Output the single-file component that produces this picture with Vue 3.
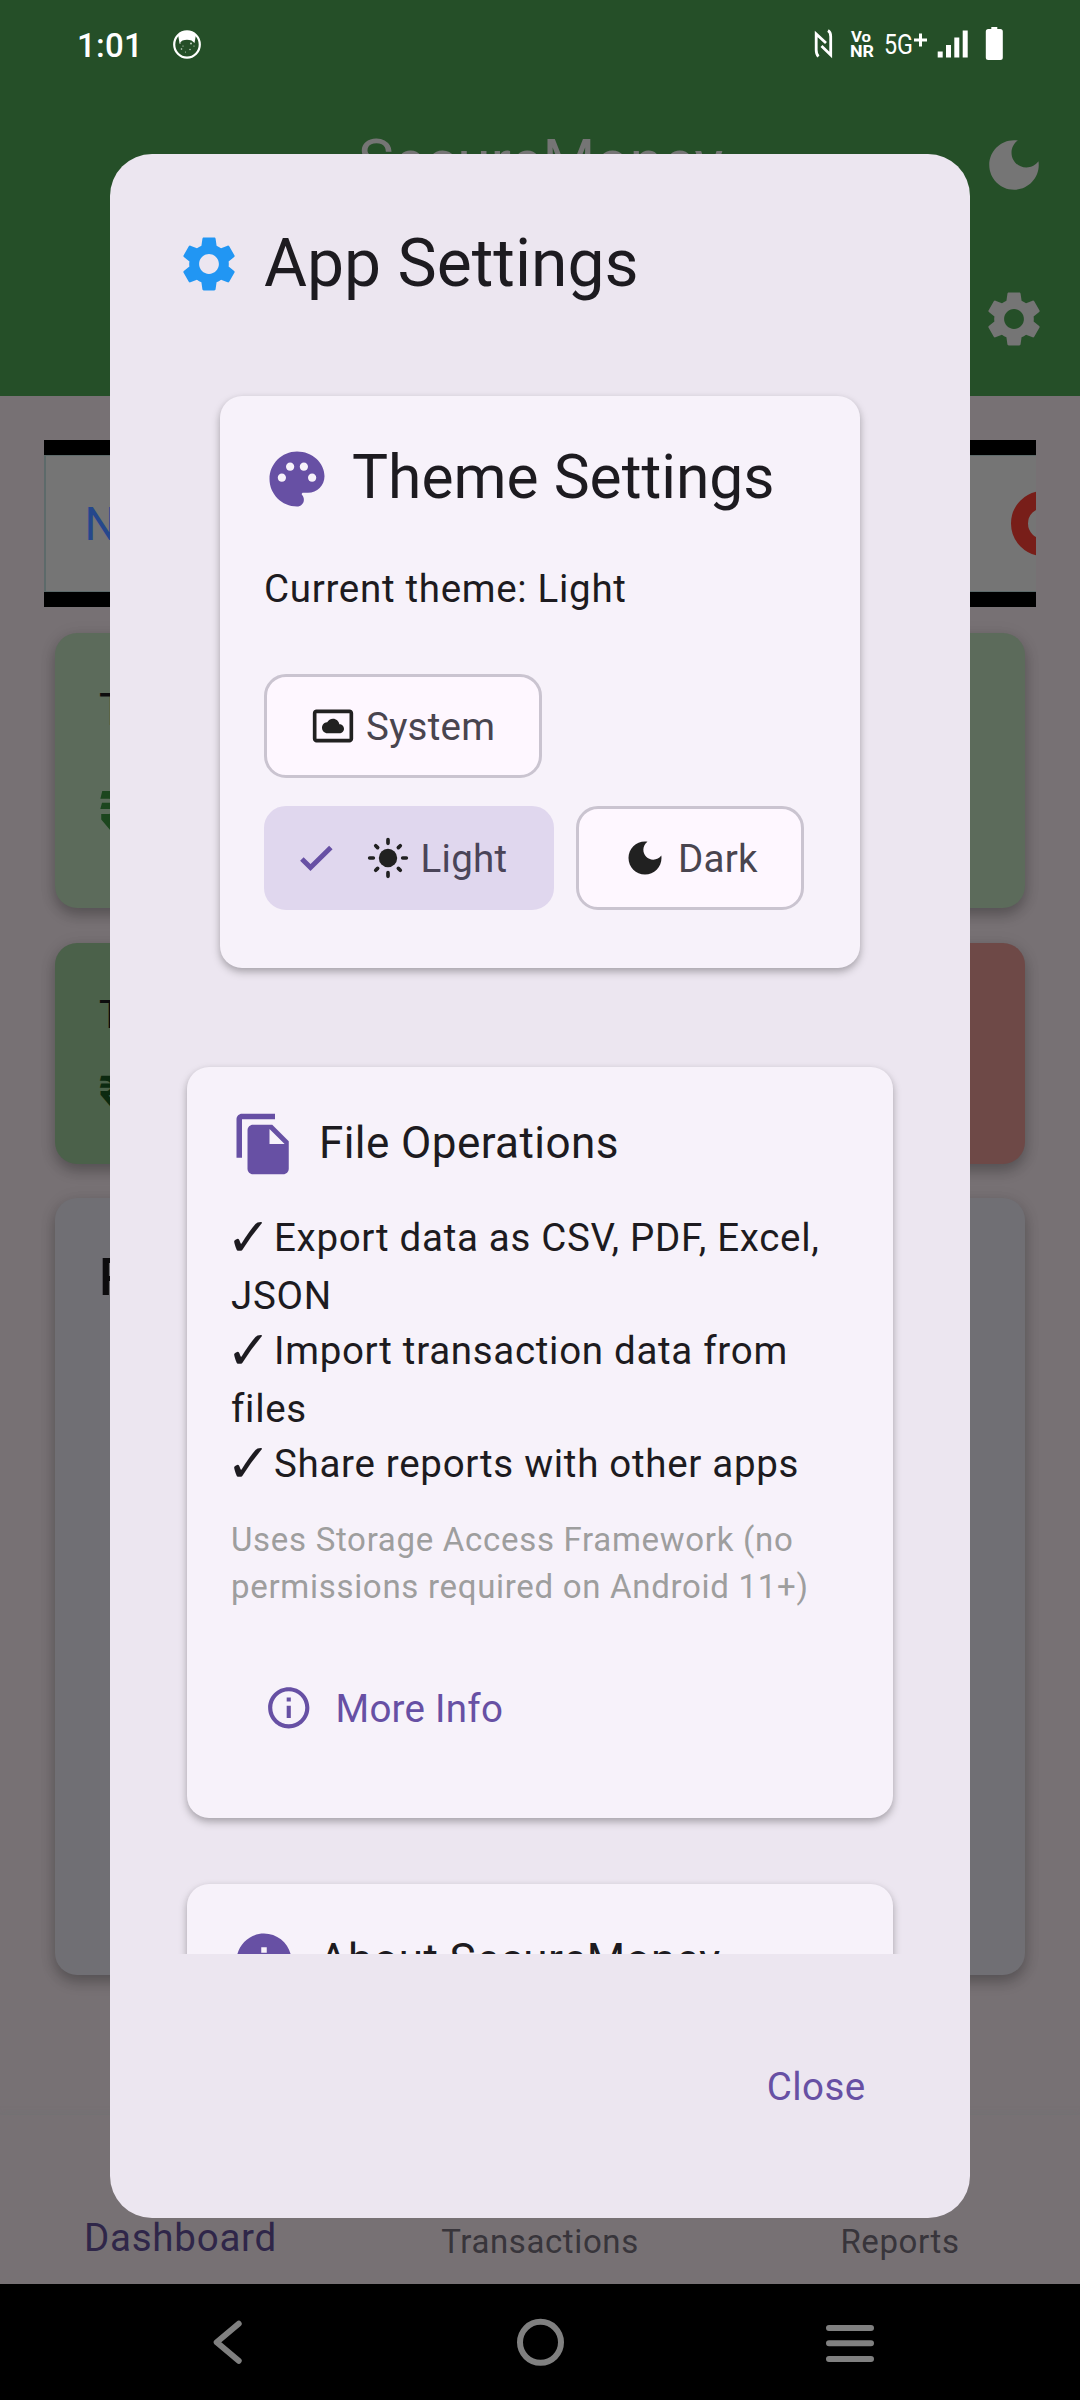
<script setup>
const gearPath = 'M19.14 12.94c.04-.3.06-.61.06-.94 0-.32-.02-.64-.07-.94l2.03-1.58c.18-.14.23-.41.12-.61l-1.92-3.32c-.12-.22-.37-.29-.59-.22l-2.39.96c-.5-.38-1.03-.7-1.62-.94l-.36-2.54c-.04-.24-.24-.41-.48-.41h-3.84c-.24 0-.43.17-.47.41l-.36 2.54c-.59.24-1.13.57-1.62.94l-2.39-.96c-.22-.08-.47 0-.59.22L2.74 8.87c-.12.21-.08.47.12.61l2.03 1.58c-.05.3-.09.63-.09.94s.02.64.07.94l-2.03 1.58c-.18.14-.23.41-.12.61l1.92 3.32c.12.22.37.29.59.22l2.39-.96c.5.38 1.03.7 1.62.94l.36 2.54c.05.24.24.41.48.41h3.84c.24 0 .44-.17.47-.41l.36-2.54c.59-.24 1.13-.56 1.62-.94l2.39.96c.22.08.47 0 .59-.22l1.92-3.32c.12-.22.07-.47-.12-.61l-2.01-1.58zM12 15.6c-1.98 0-3.6-1.62-3.6-3.6s1.62-3.6 3.6-3.6 3.6 1.62 3.6 3.6-1.62 3.6-3.6 3.6z'
const moonPath = 'M12 3c-4.97 0-9 4.03-9 9s4.03 9 9 9 9-4.03 9-9c0-.46-.04-.92-.1-1.36-.98 1.37-2.58 2.26-4.4 2.26-2.98 0-5.4-2.42-5.4-5.4 0-1.81.89-3.42 2.26-4.4-.44-.06-.9-.1-1.36-.1z'

const features = [
  { head: 'Export data as CSV, PDF, Excel,', tail: 'JSON' },
  { head: 'Import transaction data from', tail: 'files' },
  { head: 'Share reports with other apps', tail: '' }
]
const tabs = [
  { label: 'Dashboard', active: true },
  { label: 'Transactions', active: false },
  { label: 'Reports', active: false }
]
</script>

<template>
  <div class="screen">
    <div class="backdrop">
      <header class="topbar">
        <div class="status">
          <span class="clock">1:01</span>
          <svg class="cat" viewBox="0 0 28 29">
            <ellipse cx="14" cy="14.5" rx="12.8" ry="13.2" fill="none" stroke="#fff" stroke-width="2.2" />
            <path d="M5 4.5Q14-1.5 23 4.5L21.5 13 18.5 10.5Q14 8.8 9.5 10.5L6.500 13Z" fill="#fff" />
            <g fill="#d5e0d5">
              <circle cx="7" cy="13" r=".8" /><circle cx="18" cy="13.500" r=".9" /><circle cx="10" cy="16" r=".6" />
              <circle cx="21" cy="16" r=".6" /><circle cx="8.500" cy="19" r=".8" /><circle cx="17" cy="19.500" r=".7" />
              <circle cx="12.500" cy="22" r=".5" />
            </g>
          </svg>
          <svg class="radio" viewBox="0 0 200 40" font-family="Roboto, sans-serif" fill="#fff">
            <path d="M5.500 36.500Q3.200 34.500 3.200 30V14L13 23M8.500 26L17.700 35V16.500Q17.700 12 15 10.500" fill="none" stroke="#fff" stroke-width="2.800" />
            <text x="38" y="22" font-size="14" font-weight="700" textLength="20" lengthAdjust="spacingAndGlyphs">Vo</text>
            <text x="37" y="36.500" font-size="16.500" font-weight="700" textLength="24" lengthAdjust="spacingAndGlyphs">NR</text>
            <text x="71" y="33.500" font-size="28.500" font-weight="400" textLength="29" lengthAdjust="spacingAndGlyphs">5G</text>
            <path d="M101 20h13M107.500 13.500v13" stroke="#fff" stroke-width="3" />
            <path d="M124.700 31.500h5v6h-5zM133 25h5v12.500h-5zM141.300 17.500h5v20h-5zM149.700 10.500h5v27h-5z" />
            <path d="M178.300 7h6v2h3q2.500 0 2.500 2.500v26q0 2.500-2.500 2.500h-12q-2.500 0-2.500-2.500v-26q0-2.500 2.500-2.500h3z" />
          </svg>
        </div>
        <div class="appbar">
          <span class="app-title">SecureMoney</span>
          <div class="bar-actions">
            <svg class="icon66" viewBox="0 0 24 24" fill="#757575"><path :d="moonPath" /></svg>
            <svg class="icon66" viewBox="0 0 24 24" fill="#757575"><path :d="gearPath" /></svg>
          </div>
        </div>
      </header>

      <main class="content">
        <div class="ad">
          <div class="ad-body">
            <span class="ad-text">N</span>
            <span class="ad-ring"></span>
          </div>
        </div>
        <section class="bcard balance">
          <p class="label">Total Balance</p>
          <p class="amount">₹0.00</p>
        </section>
        <div class="pair">
          <section class="bcard income">
            <p class="label">Total Income</p>
            <p class="amount">₹0.00</p>
          </section>
          <section class="bcard expense"></section>
        </div>
        <section class="bcard recent"><p class="label">Recent</p></section>
      </main>

      <nav class="tabs">
        <span v-for="t in tabs" :key="t.label" :class="['tab', { active: t.active }]">{{ t.label }}</span>
      </nav>
      <footer class="sysnav">
        <svg viewBox="0 0 54 54"><path d="M35.700 8.700L13.700 27.200L35.700 45.700" fill="none" stroke="#808080" stroke-width="6" stroke-linecap="round" stroke-linejoin="round" /></svg>
        <svg viewBox="0 0 54 54"><circle cx="27.500" cy="27.300" r="20.500" fill="none" stroke="#808080" stroke-width="6" /></svg>
        <svg viewBox="0 0 54 54"><path d="M6 13h42M6 28.300h42M6 44h42" fill="none" stroke="#808080" stroke-width="6" stroke-linecap="round" /></svg>
      </footer>
    </div>

    <div class="dialog">
      <div class="dlg-title">
        <svg class="icon66" viewBox="0 0 24 24" fill="#2196f3"><path :d="gearPath" /></svg>
        <h1>App Settings</h1>
      </div>

      <div class="scroll">
        <section class="card theme">
          <div class="card-head">
            <svg class="icon66" viewBox="0 0 24 24" fill="#6750a4"><path d="M12 2C6.490 2 2 6.490 2 12s4.490 10 10 10c1.380 0 2.500-1.120 2.500-2.500 0-.61-.23-1.200-.64-1.670-.08-.1-.13-.21-.13-.33 0-.28.22-.5.5-.5H16c3.310 0 6-2.690 6-6 0-4.960-4.490-9-10-9zm-5.500 11c-.83 0-1.500-.67-1.500-1.500S5.670 10 6.500 10 8 10.670 8 11.500 7.330 13 6.500 13zm3-4C8.670 9 8 8.330 8 7.500S8.670 6 9.500 6s1.500.67 1.500 1.500S10.330 9 9.500 9zm5 0c-.83 0-1.500-.67-1.500-1.500S13.670 6 14.500 6s1.500.67 1.500 1.500S15.330 9 14.500 9zm3 4c-.83 0-1.500-.67-1.500-1.500s.67-1.500 1.500-1.500 1.500.67 1.500 1.500-.67 1.500-1.500 1.500z" /></svg>
            <h2>Theme Settings</h2>
          </div>
          <p class="current">Current theme: Light</p>
          <div class="chips">
            <div class="chip system">
              <svg class="icon44" viewBox="0 0 24 24" fill="#212121"><path d="M9 16h6.500c1.380 0 2.500-1.120 2.500-2.500S16.880 11 15.500 11h-.05c-.24-1.690-1.690-3-3.450-3-1.400 0-2.600.83-3.160 2.020h-.16C7.170 10.180 6 11.450 6 13c0 1.660 1.340 3 3 3zM21 3H3c-1.100 0-2 .9-2 2v14c0 1.100.9 2 2 2h18c1.100 0 2-.9 2-2V5c0-1.100-.9-2-2-2zm0 16.010H3V4.990h18v14.020z" /></svg>
              <span>System</span>
            </div>
            <div class="chip light">
              <svg class="icon44 tick" viewBox="0 0 24 24"><path d="M4.300 12.500L9 17.200L20.100 6.300" fill="none" stroke="#6750a4" stroke-width="2.700" /></svg>
              <svg class="icon44" viewBox="0 0 24 24" fill="#212121">
                <circle cx="12" cy="12" r="5" />
                <path d="M2 12h2M20 12h2M12 2v2M12 20v2M5.300 5.300l1.050 1.050M17.650 17.650l1.050 1.050M5.300 18.700l1.050-1.050M17.650 6.350l1.050-1.050" stroke="#212121" stroke-width="2" stroke-linecap="round" />
              </svg>
              <span>Light</span>
            </div>
            <div class="chip dark">
              <svg class="icon44" viewBox="0 0 24 24" fill="#212121"><path :d="moonPath" /></svg>
              <span>Dark</span>
            </div>
          </div>
        </section>

        <section class="card files">
          <div class="card-head">
            <svg class="icon66" viewBox="0 0 24 24" fill="#6750a4"><path d="M16 1H4c-1.100 0-2 .9-2 2v14h2V3h12V1zm-1 4l6 6v10c0 1.100-.9 2-2 2H7.990C6.890 23 6 22.100 6 21l.01-14c0-1.100.89-2 1.990-2h7zm-1 7h5.500L14 6.500V12z" /></svg>
            <h3>File Operations</h3>
          </div>
          <ul class="features">
            <li v-for="f in features" :key="f.head">
              <div class="line"><span class="mark">✓</span><span>{{ f.head }}</span></div>
              <div v-if="f.tail" class="line tail">{{ f.tail }}</div>
            </li>
          </ul>
          <p class="note">Uses Storage Access Framework (no<br />permissions required on Android 11+)</p>
          <div class="more">
            <svg viewBox="0 0 24 24" fill="#6750a4"><path d="M11 7h2v2h-2zm0 4h2v6h-2zm1-9C6.480 2 2 6.480 2 12s4.480 10 10 10 10-4.480 10-10S17.520 2 12 2zm0 18c-4.410 0-8-3.590-8-8s3.590-8 8-8 8 3.590 8 8-3.590 8-8 8z" /></svg>
            <span>More Info</span>
          </div>
        </section>

        <section class="card about">
          <div class="card-head">
            <svg class="icon66" viewBox="0 0 24 24" fill="#6750a4"><path d="M12 2C6.480 2 2 6.480 2 12s4.480 10 10 10 10-4.480 10-10S17.520 2 12 2zm1 15h-2v-6h2v6zm0-8h-2V7h2v2z" /></svg>
            <h3>About SecureMoney</h3>
          </div>
        </section>
      </div>

      <div class="dlg-actions"><span>Close</span></div>
    </div>
  </div>
</template>

<style>
body { margin: 0; }
</style>

<style scoped>
.screen {
  position: relative;
  width: 1080px;
  height: 2400px;
  overflow: hidden;
  font-family: Roboto, sans-serif;
  color: #1d1b20;
}
h1, h2, h3, p, ul { margin: 0; padding: 0; font-weight: 400; }
ul { list-style: none; }
svg { display: block; flex: none; }
.icon66 { width: 66px; height: 66px; }
.icon44 { width: 44px; height: 44px; }

.backdrop { display: flex; flex-direction: column; height: 100%; background: #777174; }
.topbar { height: 396px; background: #254f28; flex: none; }
.status { display: flex; height: 88px; padding-left: 77px; box-sizing: border-box; }
.clock { flex: none; width: 96px; font-size: 33px; font-weight: 500; line-height: 38px; padding-top: 26.500px; letter-spacing: .3px; color: #fff; }
.cat { width: 28px; height: 29px; margin-top: 30px; }
.radio { width: 200px; height: 40px; margin: 20px 0 0 612px; }
.appbar { display: flex; justify-content: space-between; padding: 0 33px 0 358px; }
.app-title { font-size: 60.500px; line-height: 70px; margin-top: 40px; letter-spacing: -.1px; color: #757575; }
.bar-actions { display: flex; flex-direction: column; gap: 88px; margin-top: 44px; }

.content { display: flex; flex-direction: column; padding: 44px 55px 0; height: 1719px; box-sizing: border-box; flex: none; }
.ad { margin: 0 -11px 25.500px; padding: 15px 0; height: 137px; background: #000; }
.ad-body {
  display: flex; justify-content: space-between; align-items: center;
  height: 137px; box-sizing: border-box; overflow: hidden;
  background: #757575; border: 2px solid #5d6a6a; border-width: 1px 0 1px 2px;
}
.ad-text { margin-left: 38.500px; font-size: 46px; font-weight: 400; color: #25478c; }
.ad-ring { width: 31px; height: 31px; border: 17.500px solid #781e19; border-radius: 50%; margin-right: -39.500px; flex: none; }
.bcard {
  box-sizing: border-box; border-radius: 22px; padding: 44px;
  box-shadow: 0 7px 14px rgba(0, 0, 0, .24), 0 2px 18px rgba(0, 0, 0, .08);
}
.label { font-size: 38.500px; line-height: 55px; color: #0d0c0e; white-space: nowrap; }
.amount { font-weight: 700; white-space: nowrap; }
.balance { height: 275.500px; background: #5c6b5b; }
.balance .label { font-size: 44px; line-height: 66px; }
.balance .amount { font-size: 66px; line-height: 88px; margin-top: 29px; color: #1c461e; }
.pair { display: grid; grid-template-columns: 1fr 1fr; gap: 22px; margin-top: 35px; }
.pair .bcard { height: 220.500px; }
.income { background: #4b614a; }
.income .label { margin-top: 0; }
.income .amount { font-size: 44px; line-height: 55px; margin-top: 23px; color: #0c2a10; }
.expense { background: #6e4947; }
.recent { height: 777px; margin-top: 34px; background: #706f74; }
.recent .label { font-size: 51px; line-height: 66px; font-weight: 500; padding-top: 3px; }

.tabs {
  display: flex; align-items: flex-end; height: 169px; flex: none;
  box-shadow: 0 0 6px rgba(108, 115, 116, .6);
}
.tab { flex: 1; text-align: center; font-size: 33px; line-height: 55px; letter-spacing: .6px; color: #38353b; padding-bottom: 15.500px; }
.tab.active { font-size: 38.500px; letter-spacing: .76px; color: #2f2649; padding-bottom: 19.500px; text-indent: 1px; }
.sysnav { display: flex; justify-content: space-between; align-items: center; flex: 1; background: #000; padding: 0 203px; }
.sysnav svg { width: 54px; height: 54px; }

.dialog {
  position: absolute; left: 110px; top: 154px;
  width: 860px; height: 2064px; border-radius: 42px;
  display: flex; flex-direction: column; background: #ece6f0;
}
.dlg-title { display: flex; align-items: center; gap: 22px; padding: 77px 66px 0; }
.dlg-title h1 { font-size: 66px; line-height: 66px; }
.scroll { height: 1657px; padding: 99px 77px 0; box-sizing: border-box; overflow: hidden; }
.card {
  box-sizing: border-box; border-radius: 22px; background: #f7f2fa; padding: 44px;
  box-shadow: 0 4px 8px rgba(0, 0, 0, .26), 0 2px 6px rgba(0, 0, 0, .06);
}
.card-head { display: flex; align-items: center; gap: 22px; }
.theme { height: 572px; margin: 0 33px 99px; padding-top: 50px; }
.theme h2 { font-size: 60.500px; line-height: 62px; padding-bottom: 2px; }
.current { margin-top: 49px; font-size: 38.500px; line-height: 55px; letter-spacing: .7px; }
.chips { display: flex; flex-wrap: wrap; gap: 28px 22px; margin-top: 58px; }
.chip {
  display: flex; align-items: center; box-sizing: border-box; height: 104px;
  border: 3px solid #cac4d0; border-radius: 22px; padding-left: 44px;
  background: #fef7ff; font-size: 38.500px; line-height: 55px; letter-spacing: .27px; color: #49454f;
}
.chip span { margin-left: 11px; }
.system { width: 278px; margin-right: 200px; }
.light { width: 290px; background: #e0d7ee; border-color: #e0d7ee; padding-left: 27px; color: #4a4458; }
.tick { margin-right: 27.500px; }
.dark { width: 228px; }

.files { height: 751px; }
h3 { font-size: 44px; line-height: 60px; letter-spacing: .42px; padding-bottom: 2px; }
.features { margin-top: 33px; font-size: 38.500px; letter-spacing: .7px; }
.line { display: flex; height: 55px; line-height: 55px; white-space: nowrap; }
.tail { margin-top: 3px; }
.mark { flex: none; width: 43px; height: 55px; overflow: hidden; font-family: "DejaVu Sans", sans-serif; font-size: 54px; letter-spacing: 0; text-indent: -5px; }
.note { margin-top: 25px; font-size: 33px; line-height: 47px; letter-spacing: .7px; color: #9e9e9e; white-space: nowrap; }
.more { display: flex; align-items: center; gap: 22px; margin: 73px 0 0 33px; height: 50px; font-size: 38.500px; letter-spacing: .27px; color: #6750a4; }
.more svg { width: 49.500px; height: 49.500px; }
.about { height: 400px; margin-top: 66px; }

.dlg-actions { flex: 1; display: flex; align-items: center; justify-content: flex-end; padding-right: 104.500px; font-size: 38.500px; letter-spacing: .4px; color: #6750a4; }
</style>
